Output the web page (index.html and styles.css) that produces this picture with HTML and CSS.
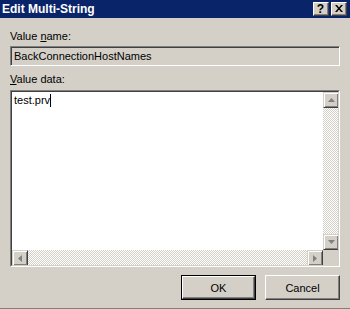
FILE: index.html
```html
<!DOCTYPE html>
<html>
<head>
<meta charset="utf-8">
<link rel="stylesheet" href="styles.css">
</head>
<body>
<div class="window">
  <div class="titlebar">
    <span class="title">Edit Multi-String</span>
    <div class="tbtns">
      <div class="tbtn">?</div>
      <div class="tbtn">
        <svg width="8" height="7" viewBox="0 0 8 7"><path d="M0 0h2l2 2.5 2-2.5h2l-3 3.5 3 3.5h-2l-2-2.5-2 2.5h-2l3-3.5z" fill="#000"/></svg>
      </div>
    </div>
  </div>
  <div class="content">
    <div class="lbl lbl-name">Value <u>n</u>ame:</div>
    <div class="field">BackConnectionHostNames</div>
    <div class="lbl lbl-data"><u>V</u>alue data:</div>
    <div class="textarea">
      <div class="edit"><span>test.prv</span><span class="caret"></span></div>
      <div class="vscroll">
        <div class="sbtn"><svg width="7" height="4" viewBox="0 0 7 4"><path d="M3.5 0L7 4H0z" fill="#808080"/></svg></div>
        <div class="track"></div>
        <div class="sbtn"><svg width="7" height="4" viewBox="0 0 7 4"><path d="M0 0h7L3.5 4z" fill="#808080"/></svg></div>
      </div>
      <div class="hscroll">
        <div class="sbtn"><svg width="4" height="7" viewBox="0 0 4 7"><path d="M0 3.5L4 0v7z" fill="#808080"/></svg></div>
        <div class="track"></div>
        <div class="sbtn"><svg width="4" height="7" viewBox="0 0 4 7"><path d="M0 0l4 3.5L0 7z" fill="#808080"/></svg></div>
      </div>
      <div class="corner"></div>
    </div>
    <div class="buttons">
      <div class="btn default"><div class="btn-in">OK</div></div>
      <div class="btn"><div class="btn-in">Cancel</div></div>
    </div>
  </div>
</div>
</body>
</html>
```
FILE: styles.css
```css
* { box-sizing: border-box; }
html, body { margin: 0; padding: 0; }
body {
  width: 350px;
  height: 309px;
  background: #d4d0c8;
  font-family: "Liberation Sans", Arial, sans-serif;
  font-size: 11px;
  color: #000;
  overflow: hidden;
}
.window {
  width: 350px;
  height: 309px;
  border-bottom: 1px solid #808080;
  display: flex;
  flex-direction: column;
}
.titlebar {
  height: 18px;
  background: #0a246a;
  display: flex;
  align-items: center;
  justify-content: space-between;
  padding: 0 3px 1px 2px;
}
.title {
  color: #fff;
  font-weight: bold;
  font-size: 12px;
}
.tbtns { display: flex; gap: 2px; }
.tbtn {
  width: 16px;
  height: 14px;
  background: #d4d0c8;
  border-top: 1px solid #fff;
  border-left: 1px solid #fff;
  border-right: 1px solid #404040;
  border-bottom: 1px solid #404040;
  box-shadow: inset -1px -1px 0 #808080;
  display: flex;
  align-items: center;
  justify-content: center;
  font-weight: bold;
  font-size: 12px;
  line-height: 12px;
  padding-right: 1px;
}
.content {
  flex: 1;
  padding: 12px 10px 0 10px;
  display: flex;
  flex-direction: column;
}
.lbl { height: 13px; line-height: 13px; }
.lbl-name { margin-bottom: 3px; }
.lbl-data { margin-top: 7px; margin-bottom: 4px; }
.field {
  height: 20px;
  border-top: 1px solid #808080;
  border-left: 1px solid #808080;
  border-right: 1px solid #fff;
  border-bottom: 1px solid #fff;
  box-shadow: inset 1px 1px 0 #404040, inset -1px -1px 0 #d4d0c8;
  padding: 0 3px;
  line-height: 18px;
  background: #d4d0c8;
}
.textarea {
  height: 177px;
  border-top: 1px solid #808080;
  border-left: 1px solid #808080;
  border-right: 1px solid #fff;
  border-bottom: 1px solid #fff;
  background: #fff;
  display: grid;
  grid-template-columns: 1fr 16px;
  grid-template-rows: 1fr 16px;
  position: relative;
}
.textarea::before {
  content: "";
  position: absolute;
  inset: 0;
  border-top: 1px solid #404040;
  border-left: 1px solid #404040;
  border-right: 1px solid #d4d0c8;
  border-bottom: 1px solid #d4d0c8;
  pointer-events: none;
}
.edit {
  padding: 3px 0 0 3px;
  line-height: 13px;
  display: flex;
  align-items: flex-start;
}
.caret {
  width: 1px;
  height: 13px;
  background: #000;
}
.vscroll {
  margin-top: 1px;
  margin-right: 1px;
  display: flex;
  flex-direction: column;
}
.hscroll {
  margin-left: 1px;
  margin-bottom: 1px;
  display: flex;
}
.corner {
  background: #d4d0c8;
  margin: 0 1px 1px 0;
}
.track {
  flex: 1;
  background-color: #fff;
  background-image: repeating-conic-gradient(#d4d0c8 0 25%, #fff 0 50%);
  background-size: 2px 2px;
}
.sbtn {
  width: 16px;
  height: 16px;
  flex: none;
  background: #d4d0c8;
  border-top: 1px solid #d4d0c8;
  border-left: 1px solid #d4d0c8;
  border-right: 1px solid #404040;
  border-bottom: 1px solid #404040;
  box-shadow: inset 1px 1px 0 #fff, inset -1px -1px 0 #808080;
  display: flex;
  align-items: center;
  justify-content: center;
}
.sbtn svg { display: block; }
.buttons {
  margin-top: 8px;
  display: flex;
  justify-content: flex-end;
  gap: 9px;
}
.btn {
  width: 75px;
  height: 25px;
  border-top: 1px solid #fff;
  border-left: 1px solid #fff;
  border-right: 1px solid #404040;
  border-bottom: 1px solid #404040;
  box-shadow: inset -1px -1px 0 #808080;
  display: flex;
}
.btn.default {
  border: 1px solid #000;
  box-shadow: none;
}
.btn-in {
  flex: 1;
  display: flex;
  align-items: center;
  justify-content: center;
  font-size: 11px;
}
.btn.default .btn-in {
  border-top: 1px solid #fff;
  border-left: 1px solid #fff;
  border-right: 1px solid #404040;
  border-bottom: 1px solid #404040;
  box-shadow: inset -1px -1px 0 #808080;
}
```
